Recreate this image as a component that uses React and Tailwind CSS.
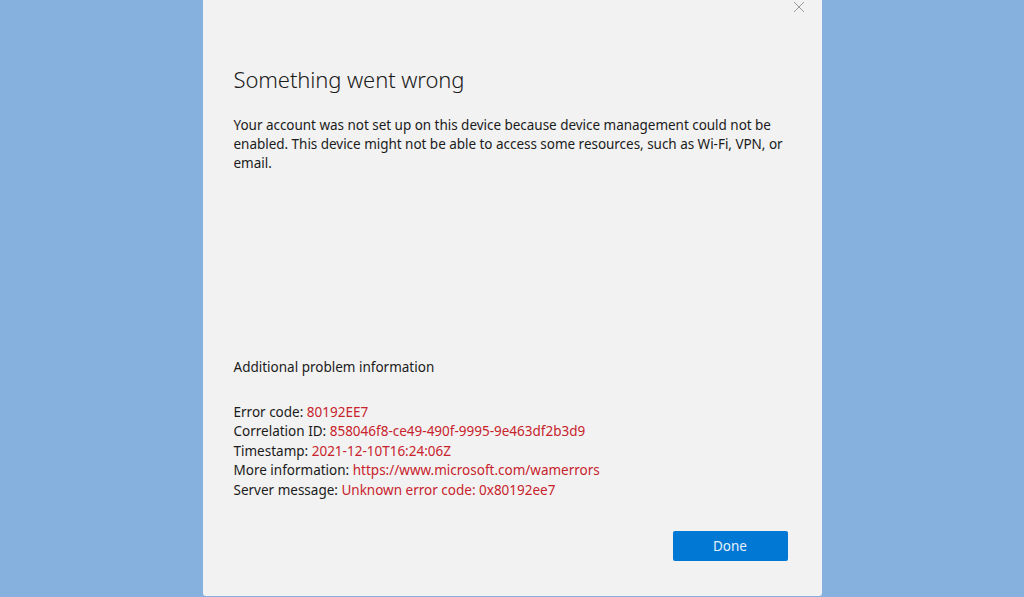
export default function App() {
  const rows = [
    ['Error code:', '80192EE7'],
    ['Correlation ID:', '858046f8-ce49-490f-9995-9e463df2b3d9'],
    ['Timestamp:', '2021-12-10T16:24:06Z'],
    ['More information:', 'https://www.microsoft.com/wamerrors'],
    ['Server message:', 'Unknown error code: 0x80192ee7'],
  ]

  return (
    <div className="w-[1024px] h-[597px] bg-[#86b0de] flex justify-center overflow-hidden" style={{ fontFamily: '"Noto Sans", "Open Sans", sans-serif' }}>
      <div className="w-[619px] h-[596px] bg-[#f2f2f2] rounded-b-[3px] relative flex flex-col pl-[31px] pr-[34px]">
        <button className="absolute top-[1px] right-[17px] w-[12px] h-[12px] text-[#9a9a9a]">
          <svg viewBox="0 0 12 12" className="w-[12px] h-[12px]" fill="none" stroke="currentColor" strokeWidth="1">
            <path d="M1 1L11 11M11 1L1 11" />
          </svg>
        </button>

        <h1 className="mt-[63px] text-[22px] leading-[32px] font-light text-[#1b1b1b] tracking-[-0.1px]">Something went wrong</h1>

        <p className="mt-[21px] text-[13.5px] leading-[19px] text-[#1b1b1b] tracking-[-0.03px]">
          Your account was not set up on this device because device management could not be enabled. This device might not be able to access some resources, such as Wi-Fi, VPN, or email.
        </p>

        <div className="mt-[185px] text-[13.5px] leading-[19px] text-[#1b1b1b]">Additional problem information</div>

        <div className="mt-[26px] text-[13.5px] leading-[19.4px] text-[#1b1b1b]">
          {rows.map(([label, value]) => (
            <div key={label}>
              {label} <span className="text-[#c8232c]">{value}</span>
            </div>
          ))}
        </div>

        <div className="mt-[31px] flex justify-end">
          <button className="w-[115px] h-[30px] bg-[#0078d4] text-[#e6f1fb] text-[13.5px] rounded-[2px]">Done</button>
        </div>
      </div>
    </div>
  )
}
